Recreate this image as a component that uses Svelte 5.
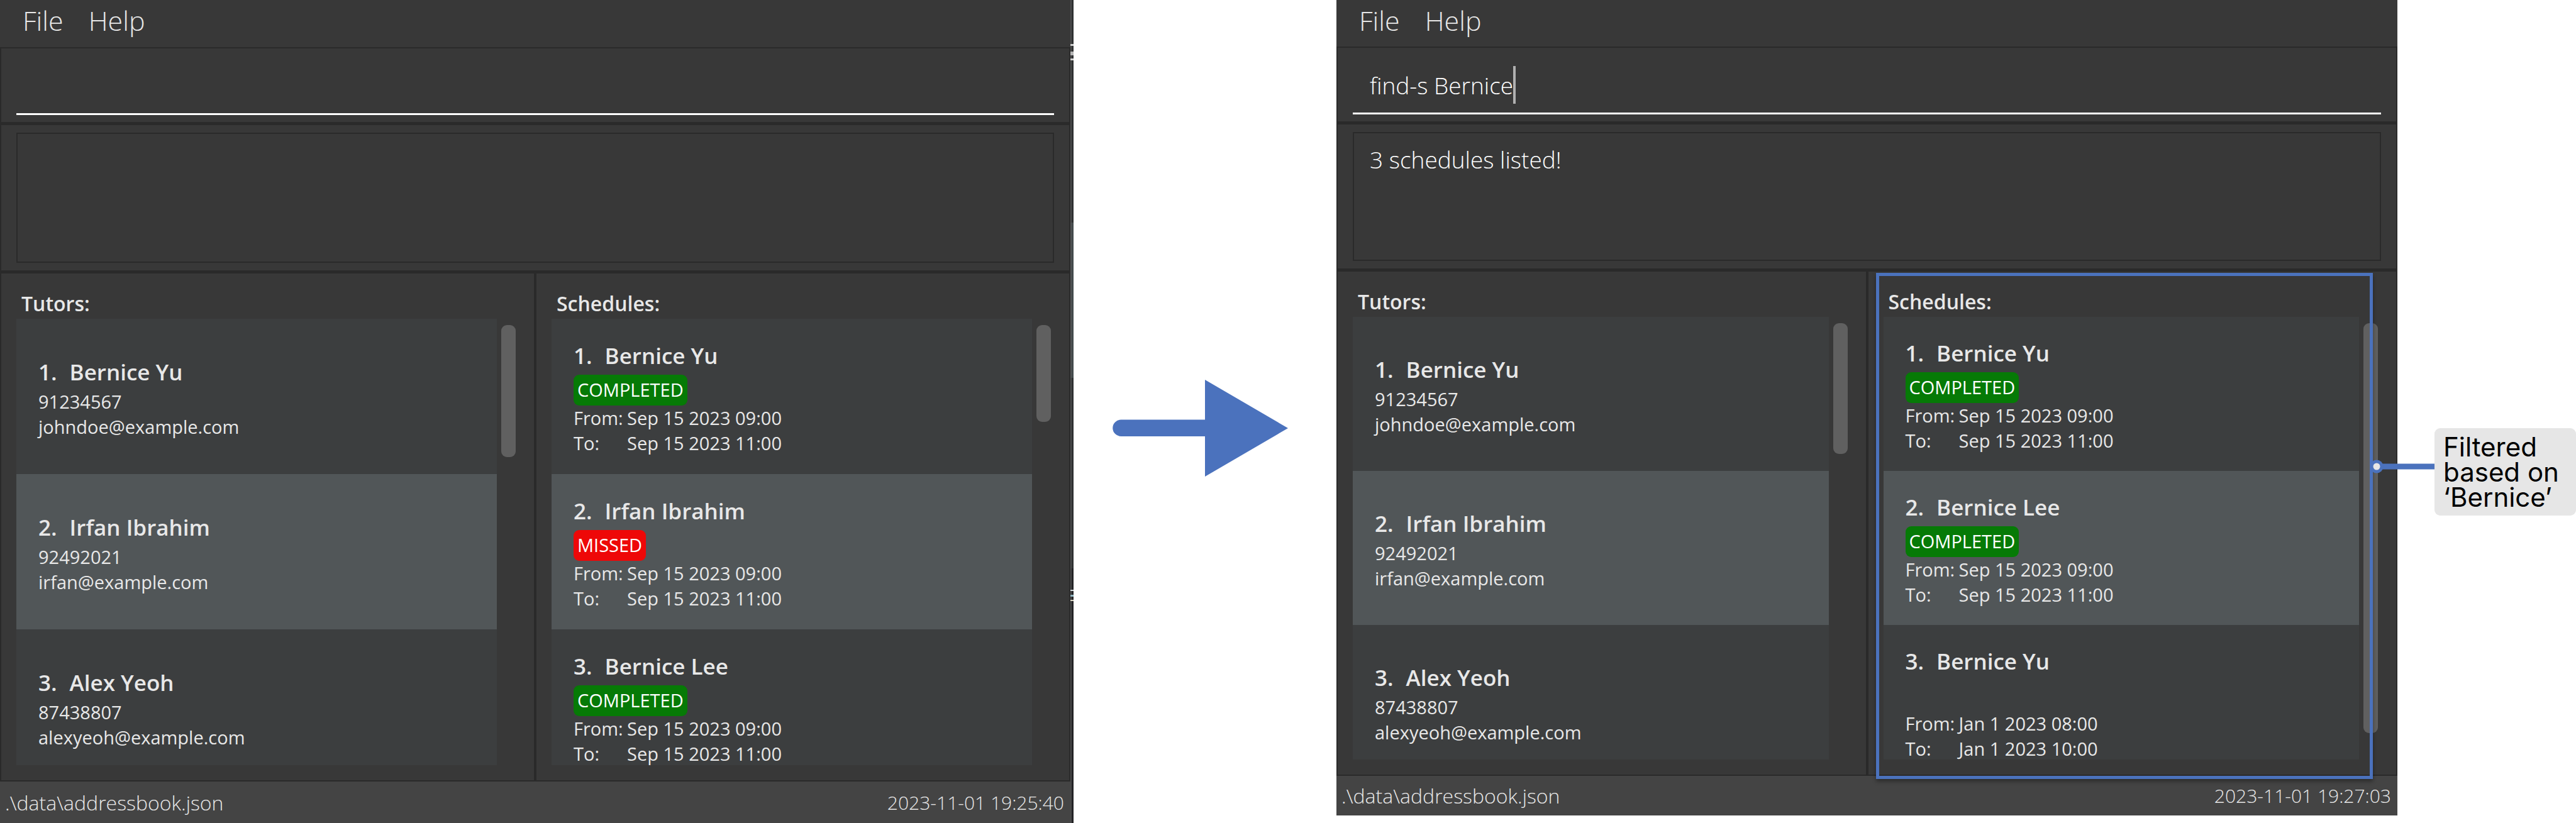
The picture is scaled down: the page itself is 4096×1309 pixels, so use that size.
<script>
  const tutors = [
    { name: 'Bernice Yu', phone: '91234567', email: 'johndoe@example.com' },
    { name: 'Irfan Ibrahim', phone: '92492021', email: 'irfan@example.com' },
    { name: 'Alex Yeoh', phone: '87438807', email: 'alexyeoh@example.com' }
  ];

  const allSchedules = [
    { name: 'Bernice Yu', status: 'COMPLETED', from: 'Sep 15 2023 09:00', to: 'Sep 15 2023 11:00' },
    { name: 'Irfan Ibrahim', status: 'MISSED', from: 'Sep 15 2023 09:00', to: 'Sep 15 2023 11:00' },
    { name: 'Bernice Lee', status: 'COMPLETED', from: 'Sep 15 2023 09:00', to: 'Sep 15 2023 11:00' }
  ];

  const foundSchedules = [
    { name: 'Bernice Yu', status: 'COMPLETED', from: 'Sep 15 2023 09:00', to: 'Sep 15 2023 11:00' },
    { name: 'Bernice Lee', status: 'COMPLETED', from: 'Sep 15 2023 09:00', to: 'Sep 15 2023 11:00' },
    { name: 'Bernice Yu', status: '', from: 'Jan 1 2023 08:00', to: 'Jan 1 2023 10:00' }
  ];

  const before = {
    id: 'before', command: '', result: '', schedules: allSchedules,
    tutorThumb: 30, scheduleThumb: 22, time: '2023-11-01 19:25:40', marked: false
  };
  const after = {
    id: 'after', command: 'find-s Bernice', result: '3 schedules listed!', schedules: foundSchedules,
    tutorThumb: 30, scheduleThumb: 94, time: '2023-11-01 19:27:03', marked: true
  };
</script>

{#snippet app(w)}
  <section class="app {w.id}">
    <nav class="menubar">
      <button type="button">File</button>
      <button type="button">Help</button>
    </nav>
    <div class="body">
      <div class="command">
        <label class="field">
          <input type="text" aria-label="Command" value={w.command} />
          {#if w.command}<span class="caret"></span>{/if}
        </label>
      </div>
      <div class="result"><div class="box" role="status">{w.result}</div></div>
      <div class="columns">
        <div class="column">
          <h2>Tutors:</h2>
          <div class="scroller">
            <ul>
              {#each tutors as t, i}
                <li>
                  <h3><span>{i + 1}.</span><span>{t.name}</span></h3>
                  <p>{t.phone}</p>
                  <p>{t.email}</p>
                </li>
              {/each}
            </ul>
            <div class="track"><div class="thumb" style="height: {w.tutorThumb}%"></div></div>
          </div>
        </div>
        <div class="column">
          <h2>Schedules:</h2>
          <div class="scroller">
            <ul>
              {#each w.schedules as s, i}
                <li>
                  <h3><span>{i + 1}.</span><span>{s.name}</span></h3>
                  <div class="status">
                    {#if s.status}<span class="badge {s.status.toLowerCase()}">{s.status}</span>{/if}
                  </div>
                  <dl>
                    <dt>From:</dt><dd>{s.from}</dd>
                    <dt>To:</dt><dd>{s.to}</dd>
                  </dl>
                </li>
              {/each}
            </ul>
            <div class="track"><div class="thumb" style="height: {w.scheduleThumb}%"></div></div>
          </div>
          {#if w.marked}<div class="marker"></div>{/if}
        </div>
      </div>
    </div>
    <footer>
      <span class="path">.\data\addressbook.json</span>
      <time>{w.time}</time>
    </footer>
  </section>
{/snippet}

<main>
  <div class="first">
    {@render app(before)}
    <div class="sliver"></div>
  </div>

  <div class="step">
    <svg class="arrow" viewBox="0 0 279 154" aria-hidden="true">
      <path d="M13.5 63.5H147V0L279 77L147 154V90H13.5A13.25 13.25 0 0 1 13.5 63.5Z" />
    </svg>
  </div>

  {@render app(after)}

  <aside>
    <div class="callout">
      Filtered<br />based on<br />‘Bernice’
      <svg class="connector" viewBox="0 0 103 22" aria-hidden="true">
        <path d="M11 6.5H103V15.5H11Z" />
        <circle cx="11" cy="11" r="10.5" />
        <circle class="hole" cx="11" cy="11" r="5.5" />
      </svg>
    </div>
  </aside>
</main>

<style>
  :global(body) {
    margin: 0;
    background: #fff;
  }

  main {
    --blue: #4b72bd;
    --line: #2a2a2a;
    --panel: #383838;
    display: grid;
    grid-template-columns: 1707fr 418fr 1687fr 284fr;
    align-items: start;
    font-family: 'Open Sans', 'Noto Sans', sans-serif;
  }

  .first {
    display: flex;
  }

  .app {
    flex: 1;
    min-width: 0;
    background: var(--panel);
    color: #e8e8e8;
  }

  .before {
    --menu: 75px;
    --result: 207px;
    --row: 247px;
    --list: 710px;
    --foot: 66px;
  }

  .after {
    --menu: 74px;
    --result: 205px;
    --row: 245px;
    --list: 704px;
    --foot: 63px;
  }

  .sliver {
    width: 5px;
    background:
      linear-gradient(#d0d0d0, #d0d0d0) 0 70px / 5px 3px no-repeat,
      linear-gradient(#b4b4b4, #b4b4b4) 0 82px / 5px 6px no-repeat,
      linear-gradient(#d0d0d0, #d0d0d0) 0 93px / 5px 3px no-repeat,
      linear-gradient(#d0d8dc, #d0d8dc) 0 938px / 5px 2px no-repeat,
      linear-gradient(#8fb4c0, #8fb4c0) 0 946px / 5px 3px no-repeat,
      linear-gradient(#d8d4c4, #d8d4c4) 0 954px / 5px 2px no-repeat,
      linear-gradient(90deg, rgba(90, 90, 90, 0.7) 40%, transparent 40%),
      linear-gradient(#2f3132 354px, #434a4c 354px 601px, #2f3132 601px 904px, #232326 904px);
  }

  .menubar {
    display: flex;
    gap: 40px;
    box-sizing: border-box;
    height: calc(var(--menu) + 2px);
    padding: 0 36px 10px;
    border-bottom: 2px solid var(--line);
  }

  .menubar button {
    padding: 0;
    border: 0;
    background: none;
    color: inherit;
    font: inherit;
    font-size: 43px;
    font-weight: 300;
  }

  .body {
    border: 2px solid var(--line);
    border-top: 0;
  }

  .command {
    padding: 0 24px 11px;
    border-bottom: 5px solid var(--line);
  }

  .field {
    display: flex;
    align-items: center;
    box-sizing: border-box;
    height: 106px;
    padding: 15px 27px 0;
    border-bottom: 3px solid #fff;
  }

  .field input {
    field-sizing: content;
    min-width: 20px;
    padding: 0;
    border: 0;
    outline: 0;
    background: none;
    color: #fff;
    font: inherit;
    font-size: 37px;
    font-weight: 300;
  }

  .caret {
    width: 4px;
    height: 60px;
    background: #b0b0b0;
  }

  .result {
    padding: 12px 24px;
    border-bottom: 5px solid var(--line);
  }

  .box {
    box-sizing: border-box;
    height: var(--result);
    padding: 17px 25px;
    border: 2px solid var(--line);
    color: #fff;
    font-size: 37px;
    font-weight: 300;
    line-height: 50px;
  }

  .columns {
    display: grid;
    grid-template-columns: 1fr 1fr;
    gap: 4px;
    background: var(--line);
  }

  .column {
    position: relative;
    min-width: 0;
    padding: 24px 29px 24px 24px;
    background: var(--panel);
  }

  h2 {
    margin: 0;
    padding-left: 8px;
    font-size: 32px;
    font-weight: 600;
    line-height: 48px;
  }

  .scroller {
    display: flex;
    gap: 7px;
    height: var(--list);
  }

  ul {
    flex: 1;
    margin: 0;
    padding: 0;
    overflow: hidden;
    list-style: none;
  }

  li {
    display: flex;
    flex-direction: column;
    justify-content: center;
    box-sizing: border-box;
    height: var(--row);
    padding: 6px 35px 0;
    background: #3c3e3f;
    font-size: 29px;
    line-height: 40px;
  }

  li:nth-child(even) {
    background: #515658;
  }

  h3 {
    display: flex;
    gap: 20px;
    margin: 0 0 3px;
    font-size: 35px;
    font-weight: 600;
    line-height: 48px;
  }

  p {
    margin: 0;
  }

  .status {
    display: flex;
    height: 49px;
    padding-top: 3px;
  }

  .badge {
    padding: 0 6px;
    border-radius: 9px;
    color: #fff;
    line-height: 48px;
  }

  .completed {
    background: #067a06;
  }

  .missed {
    background: #ee0808;
  }

  dl {
    display: grid;
    grid-template-columns: 85px 1fr;
    margin: 0;
  }

  dd {
    margin: 0;
  }

  .track {
    width: 23px;
    padding-top: 10px;
  }

  .thumb {
    border-radius: 9px;
    background: #606060;
  }

  .marker {
    position: absolute;
    inset: 2px 37px -7px 12px;
    border: 5px solid var(--blue);
    box-shadow: 0 4px 6px rgba(0, 0, 0, 0.35);
  }

  footer {
    display: flex;
    align-items: center;
    justify-content: space-between;
    height: var(--foot);
    padding: 0 10px 0 8px;
    background: #444;
    font-weight: 300;
  }

  .path {
    font-size: 32px;
  }

  time {
    font-size: 30px;
  }

  .step {
    padding: 604px 77px 0 62px;
  }

  .arrow {
    display: block;
    width: 100%;
    fill: var(--blue);
  }

  aside {
    padding: 681px 0 0 59px;
  }

  .callout {
    position: relative;
    padding: 10px 13px 9px 14px;
    border-radius: 9px;
    background: #e6e6e6;
    color: #000;
    font-family: Inter, sans-serif;
    font-size: 42px;
    line-height: 40px;
    white-space: nowrap;
  }

  .connector {
    position: absolute;
    top: 50px;
    right: 100%;
    width: 103px;
    height: 22px;
    fill: var(--blue);
  }

  .hole {
    fill: #e6e6e6;
  }
</style>
